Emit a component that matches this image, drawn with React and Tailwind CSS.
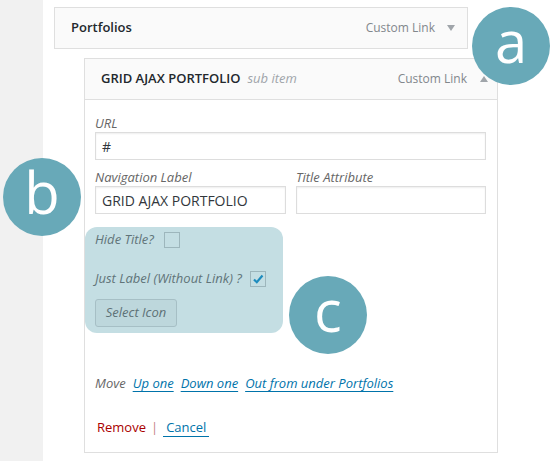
import React from 'react';

const Badge = ({ letter, className }) => (
  <div
    className={`absolute w-[78px] h-[78px] rounded-full bg-[#68a9b8] flex items-center justify-center text-white text-[58px] leading-none pb-[10px] ${className}`}
  >
    {letter}
  </div>
);

const Arrow = ({ up }) => (
  <svg width="8" height="6" viewBox="0 0 8 6">
    <path d={up ? 'M0 6 L4 0 L8 6 Z' : 'M0 0 L8 0 L4 6 Z'} fill="#a0a5aa" />
  </svg>
);

const Checkbox = ({ checked }) => (
  <span className="w-[16px] h-[16px] border border-[#9db6bc] flex items-center justify-center">
    {checked && (
      <svg width="12" height="12" viewBox="0 0 12 12">
        <path d="M2 6.5 L4.8 9.2 L10.5 2.5" fill="none" stroke="#1e8cbe" strokeWidth="2.2" />
      </svg>
    )}
  </span>
);

const App = () => {
  return (
    <div
      className="relative w-[560px] h-[461px] bg-white flex overflow-hidden text-[13px] text-[#444]"
      style={{ fontFamily: '"Open Sans", "Noto Sans", sans-serif' }}
    >
      <div className="w-[43px] shrink-0 bg-[#f1f1f1]" />

      <div className="pl-[11px] pt-[7px]">
        {/* parent menu item */}
        <div className="w-[414px] h-[42px] border border-[#dfdfdf] bg-[#fafafa] flex items-center justify-between pl-[16px] pr-[12px]">
          <span className="font-semibold text-[#23282d]">Portfolios</span>
          <span className="flex items-center gap-[12px] text-[12px] text-[#82878c]">
            Custom Link
            <Arrow />
          </span>
        </div>

        {/* sub item */}
        <div className="ml-[30px] mt-[9px] w-[414px] border border-[#dfdfdf] bg-white">
          <div className="h-[41px] bg-[#fafafa] border-b border-[#dfdfdf] flex items-center justify-between pl-[16px] pr-[9px]">
            <span className="flex items-baseline gap-[7px]">
              <span className="font-semibold text-[#23282d]">GRID AJAX PORTFOLIO</span>
              <span className="italic text-[#a0a5aa]">sub item</span>
            </span>
            <span className="flex items-center gap-[13px] text-[12px] text-[#82878c]">
              Custom Link
              <Arrow up />
            </span>
          </div>

          <div className="pl-[10px] pr-[11px] pt-[14px] pb-[15px]">
            <div className="italic text-[#666] leading-[18px]">URL</div>
            <div className="h-[28px] border border-[#dddddd] shadow-[inset_0_1px_2px_rgba(0,0,0,0.07)] flex items-center px-[6px] text-[14px] text-[#32373c]">
              #
            </div>

            <div className="mt-[8px] flex gap-[10px]">
              <div className="w-[191px]">
                <div className="italic text-[#666] leading-[18px]">Navigation Label</div>
                <div className="h-[28px] border border-[#dddddd] shadow-[inset_0_1px_2px_rgba(0,0,0,0.07)] flex items-center px-[6px] text-[14px] text-[#32373c]">
                  GRID AJAX PORTFOLIO
                </div>
              </div>
              <div className="w-[190px]">
                <div className="italic text-[#666] leading-[18px]">Title Attribute</div>
                <div className="h-[28px] border border-[#dddddd] shadow-[inset_0_1px_2px_rgba(0,0,0,0.07)]" />
              </div>
            </div>

            <div className="mt-[13px] -ml-[10px] w-[198px] rounded-[12px] bg-[#c4dee3] pl-[10px] pt-[4px] pb-[6px] text-[#617479] italic">
              <div className="h-[18px] flex items-center gap-[10px]">
                Hide Title?
                <Checkbox />
              </div>
              <div className="mt-[21px] h-[18px] flex items-center gap-[8px]">
                Just Label (Without Link) ?
                <Checkbox checked />
              </div>
              <div className="mt-[11px] w-[82px] h-[28px] rounded-[3px] border border-[#a6bfc5] bg-[#bdd7dc] flex items-center justify-center text-[#5d7176]">
                Select Icon
              </div>
            </div>

            <div className="mt-[41px] flex items-center gap-[7px] leading-[18px]">
              <span className="italic text-[#666]">Move</span>
              <span className="italic text-[#0073aa] underline underline-offset-[3px]">Up one</span>
              <span className="italic text-[#0073aa] underline underline-offset-[3px]">Down one</span>
              <span className="italic text-[#0073aa] underline underline-offset-[3px]">Out from under Portfolios</span>
            </div>

            <div className="mt-[26px] pl-[2px] flex items-start leading-[18px]">
              <span className="text-[#a00]">Remove</span>
              <span className="mx-[5px] text-[#c47f89]">|</span>
              <span className="text-[#0073aa] border-b border-[#0073aa] px-[3px]">Cancel</span>
            </div>
          </div>
        </div>
      </div>

      <Badge letter="a" className="left-[472px] top-[7px]" />
      <Badge letter="b" className="left-[3px] top-[158px]" />
      <Badge letter="c" className="left-[289px] top-[276px]" />
    </div>
  );
};

export default App;
